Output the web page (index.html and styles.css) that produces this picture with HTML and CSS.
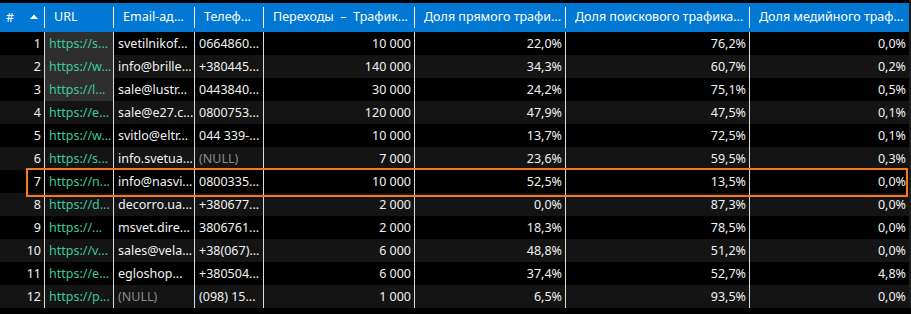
FILE: index.html
```html
<!DOCTYPE html>
<html>
<head>
<meta charset="utf-8">
<link rel="stylesheet" href="styles.css">
</head>
<body>
<div class="wrap">
  <div class="grid">
    <div class="hcell"><div class="hl hash"><span>#</span><svg class="sort" width="8" height="5" viewBox="0 0 8 5"><path d="M0 5 L4 0.5 L8 5 Z" fill="#fff"/></svg></div></div>
    <div class="hcell"><div class="hl">URL</div></div>
    <div class="hcell"><div class="hl">Email-ад...</div></div>
    <div class="hcell"><div class="hl">Телеф...</div></div>
    <div class="hcell"><div class="hl">Переходы &nbsp;–&nbsp; Трафик...</div></div>
    <div class="hcell"><div class="hl">Доля прямого трафи...</div></div>
    <div class="hcell"><div class="hl">Доля поискового трафика...</div></div>
    <div class="hcell last"><div class="hl">Доля медийного траф...</div></div>

    <div class="row">
      <div class="c n">1</div><div class="c url sel">https://s...</div><div class="c">svetilnikof...</div><div class="c">0664860...</div><div class="c n">10 000</div><div class="c n">22,0%</div><div class="c n">76,2%</div><div class="c n last">0,0%</div>
    </div>
    <div class="row alt">
      <div class="c n">2</div><div class="c url sel">https://w...</div><div class="c">info@brille...</div><div class="c">+380445...</div><div class="c n">140 000</div><div class="c n">34,3%</div><div class="c n">60,7%</div><div class="c n last">0,2%</div>
    </div>
    <div class="row">
      <div class="c n">3</div><div class="c url sel">https://l...</div><div class="c">sale@lustr...</div><div class="c">0443840...</div><div class="c n">30 000</div><div class="c n">24,2%</div><div class="c n">75,1%</div><div class="c n last">0,5%</div>
    </div>
    <div class="row alt">
      <div class="c n">4</div><div class="c url">https://e...</div><div class="c">sale@e27.c...</div><div class="c">0800753...</div><div class="c n">120 000</div><div class="c n">47,9%</div><div class="c n">47,5%</div><div class="c n last">0,1%</div>
    </div>
    <div class="row">
      <div class="c n">5</div><div class="c url">https://w...</div><div class="c">svitlo@eltr...</div><div class="c">044 339-...</div><div class="c n">10 000</div><div class="c n">13,7%</div><div class="c n">72,5%</div><div class="c n last">0,1%</div>
    </div>
    <div class="row alt">
      <div class="c n">6</div><div class="c url">https://s...</div><div class="c">info.svetua...</div><div class="c null">(NULL)</div><div class="c n">7 000</div><div class="c n">23,6%</div><div class="c n">59,5%</div><div class="c n last">0,3%</div>
    </div>
    <div class="row">
      <div class="c n">7</div><div class="c url">https://n...</div><div class="c">info@nasvi...</div><div class="c">0800335...</div><div class="c n">10 000</div><div class="c n">52,5%</div><div class="c n">13,5%</div><div class="c n last">0,0%</div>
    </div>
    <div class="row alt">
      <div class="c n">8</div><div class="c url">https://d...</div><div class="c">decorro.ua...</div><div class="c">+380677...</div><div class="c n">2 000</div><div class="c n">0,0%</div><div class="c n">87,3%</div><div class="c n last">0,0%</div>
    </div>
    <div class="row">
      <div class="c n">9</div><div class="c url">https://...</div><div class="c">msvet.dire...</div><div class="c">3806761...</div><div class="c n">2 000</div><div class="c n">18,3%</div><div class="c n">78,5%</div><div class="c n last">0,0%</div>
    </div>
    <div class="row alt">
      <div class="c n">10</div><div class="c url">https://v...</div><div class="c">sales@vela...</div><div class="c">+38(067)...</div><div class="c n">6 000</div><div class="c n">48,8%</div><div class="c n">51,2%</div><div class="c n last">0,0%</div>
    </div>
    <div class="row">
      <div class="c n">11</div><div class="c url">https://e...</div><div class="c">egloshop...</div><div class="c">+380504...</div><div class="c n">6 000</div><div class="c n">37,4%</div><div class="c n">52,7%</div><div class="c n last">4,8%</div>
    </div>
    <div class="row alt">
      <div class="c n">12</div><div class="c url">https://p...</div><div class="c null">(NULL)</div><div class="c">(098) 15...</div><div class="c n">1 000</div><div class="c n">6,5%</div><div class="c n">93,5%</div><div class="c n last">0,0%</div>
    </div>
  </div>
  <div class="focus"></div>
</div>
</body>
</html>
```

FILE: styles.css
```css
html, body {
  margin: 0;
  padding: 0;
  background: #000;
}
body {
  width: 911px;
  height: 314px;
  overflow: hidden;
  font-family: "Noto Sans", "Open Sans", sans-serif;
  font-size: 12.5px;
  color: #f2f2f2;
}
.wrap {
  position: relative;
  padding-top: 3px;
  background: linear-gradient(to right, #000 0, #000 909px, #1c1c1c 909px);
}
.grid {
  display: grid;
  grid-template-columns: 45px 69px 81px 69px 151px 151px 184px 159px;
  grid-auto-rows: 23px;
  grid-template-rows: 29px;
}
.hcell {
  background: #0078d4;
  padding: 4px 0 4px 0;
  color: #fff;
}
.hl {
  height: 21px;
  line-height: 20px;
  border-right: 1px solid #fff;
  padding-left: 9px;
  white-space: nowrap;
  overflow: hidden;
}
.hcell.last .hl {
  border-right: none;
}
.hash {
  display: flex;
  align-items: center;
  padding-left: 6px;
}
.sort {
  margin-left: 16px;
  margin-top: -2px;
}
.row {
  display: contents;
}
.c {
  background: #000;
  border-right: 1px solid #dcdcdc;
  padding: 0 4px 0 4px;
  line-height: 23px;
  white-space: nowrap;
  overflow: hidden;
}
.row.alt .c {
  background: #141414;
}
.c.last {
  border-right: none;
}
.c.n {
  text-align: right;
  padding-right: 3px;
}
.c.url {
  color: #3cc99e;
}
.row .c.sel {
  background: #2e2e2e;
}
.c.null {
  color: #8c8c8c;
}
.focus {
  position: absolute;
  left: 26px;
  top: 168px;
  width: 878px;
  height: 25px;
  border: 2px solid #f47a20;
}
```
